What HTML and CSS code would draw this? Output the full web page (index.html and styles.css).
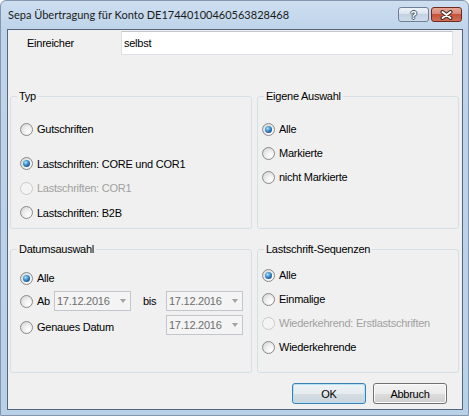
FILE: index.html
```html
<!DOCTYPE html>
<html>
<head>
<meta charset="utf-8">
<link rel="stylesheet" href="styles.css">
</head>
<body>
<div class="window">
  <div class="titlebar">
    <span class="title">Sepa Übertragung für Konto DE17440100460563828468</span>
    <div class="caption-buttons">
      <div class="cap-btn help">?</div>
      <div class="cap-btn close">
        <svg width="13" height="10" viewBox="0 0 13 10">
          <path d="M2.5 2 L10.5 8 M10.5 2 L2.5 8" stroke="#3a2a28" stroke-width="4" stroke-linecap="round"/>
          <path d="M2.5 2 L10.5 8 M10.5 2 L2.5 8" stroke="#ffffff" stroke-width="2" stroke-linecap="round"/>
        </svg>
      </div>
    </div>
  </div>
  <div class="client">
    <div class="row-einreicher">
      <span class="lbl">Einreicher</span>
      <div class="textbox">selbst</div>
    </div>
    <div class="groups">
      <fieldset class="group left">
        <legend>Typ</legend>
        <div class="opts typ">
          <div class="opt spaced"><span class="radio"></span><span>Gutschriften</span></div>
          <div class="opt"><span class="radio checked"></span><span>Lastschriften: CORE und COR1</span></div>
          <div class="opt disabled"><span class="radio"></span><span>Lastschriften: COR1</span></div>
          <div class="opt"><span class="radio"></span><span>Lastschriften: B2B</span></div>
        </div>
      </fieldset>
      <fieldset class="group right">
        <legend>Eigene Auswahl</legend>
        <div class="opts eigene">
          <div class="opt"><span class="radio checked"></span><span>Alle</span></div>
          <div class="opt"><span class="radio"></span><span>Markierte</span></div>
          <div class="opt"><span class="radio"></span><span>nicht Markierte</span></div>
        </div>
      </fieldset>
      <fieldset class="group left">
        <legend>Datumsauswahl</legend>
        <div class="datum">
          <div class="opt"><span class="radio checked"></span><span>Alle</span></div>
          <div class="date-row ab">
            <div class="opt w-ab"><span class="radio"></span><span>Ab</span></div>
            <div class="combo"><span>17.12.2016</span><span class="arrow"></span></div>
            <span class="bis">bis</span>
            <div class="combo"><span>17.12.2016</span><span class="arrow"></span></div>
          </div>
          <div class="date-row gen">
            <div class="opt w-gen"><span class="radio"></span><span>Genaues Datum</span></div>
            <div class="combo"><span>17.12.2016</span><span class="arrow"></span></div>
          </div>
        </div>
      </fieldset>
      <fieldset class="group right">
        <legend>Lastschrift-Sequenzen</legend>
        <div class="opts seq">
          <div class="opt"><span class="radio checked"></span><span>Alle</span></div>
          <div class="opt"><span class="radio"></span><span>Einmalige</span></div>
          <div class="opt disabled"><span class="radio"></span><span>Wiederkehrend: Erstlastschriften</span></div>
          <div class="opt"><span class="radio"></span><span>Wiederkehrende</span></div>
        </div>
      </fieldset>
    </div>
    <div class="buttons">
      <div class="btn default">OK</div>
      <div class="btn">Abbruch</div>
    </div>
  </div>
</div>
</body>
</html>
```
FILE: styles.css
```css
body {
  margin: 0;
  width: 469px;
  height: 416px;
  overflow: hidden;
  background: #ffffff;
}

.window {
  box-sizing: border-box;
  width: 469px;
  height: 416px;
  border: 1px solid #8396ad;
  border-radius: 6px 6px 0 0;
  background: linear-gradient(to bottom, #cddef0 0, #bfd4ea 28px, #b9d0e9 100%);
  display: flex;
  flex-direction: column;
  font-family: "Liberation Sans", Arial, sans-serif;
  font-size: 11px;
  letter-spacing: -0.25px;
  color: #000000;
}

.titlebar {
  height: 28px;
  display: flex;
  align-items: center;
  justify-content: space-between;
  padding: 0 6px 0 7px;
}

.title {
  font-family: Lato, "Liberation Sans", sans-serif;
  font-size: 11px;
  letter-spacing: 0;
  line-height: 14px;
  color: #1a1a1a;
}

.caption-buttons {
  display: flex;
  gap: 2px;
  align-self: flex-start;
  margin-top: 6px;
}

.cap-btn {
  box-sizing: border-box;
  width: 31px;
  height: 15px;
  border-radius: 3px;
  display: flex;
  align-items: center;
  justify-content: center;
}

.help {
  border: 1px solid #6e8096;
  background: linear-gradient(#eef3f9 0%, #dae4ef 45%, #c3d2e2 50%, #cfdcea 100%);
  color: #ffffff;
  font-family: "Liberation Sans", sans-serif;
  font-weight: bold;
  font-size: 11px;
  letter-spacing: 0;
  line-height: 12px;
  text-shadow: 1px 0 0 #44566c, -1px 0 0 #44566c, 0 1px 0 #44566c, 0 -1px 0 #44566c;
}

.close {
  border: 1px solid #6e2a1f;
  background: linear-gradient(#e6a797 0%, #d98a78 45%, #c6533a 50%, #d26f57 100%);
}

.client {
  flex: 1;
  margin: 0 5px 5px 6px;
  border: 1px solid #56657a;
  background: #f0f0f0;
  display: flex;
  flex-direction: column;
}

.row-einreicher {
  display: flex;
  align-items: center;
  height: 24px;
  margin-top: 1px;
  padding-left: 19px;
}

.lbl {
  width: 94px;
}

.textbox {
  box-sizing: border-box;
  width: 332px;
  height: 24px;
  background: #ffffff;
  border: 1px solid #dde0e5;
  border-top-color: #c3c7cd;
  padding: 4px 0 0 2px;
  line-height: 14px;
}

.groups {
  display: grid;
  grid-template-columns: 242px 202px;
  grid-template-rows: 140px 131px;
  column-gap: 5px;
  row-gap: 13px;
  margin: 34px 0 0 2px;
}

fieldset.group {
  margin: 0;
  padding: 0;
  border: 1px solid #d5dfe5;
  border-radius: 3px;
  min-width: 0;
  box-sizing: border-box;
}

legend {
  margin-left: 6px;
  padding: 0 2px;
  line-height: 14px;
}

.opts {
  display: flex;
  flex-direction: column;
  gap: 8px;
}

.group.left .opts,
.group.left .datum {
  padding-left: 9px;
}

.group.right .opts {
  padding-left: 4px;
}

.typ {
  padding-top: 18px;
  gap: 8.5px;
}

.typ .spaced {
  margin-bottom: 10px;
}

.eigene {
  padding-top: 18px;
}

.seq {
  padding-top: 11px;
}

.datum {
  display: flex;
  flex-direction: column;
  padding-top: 14px;
}

.opt {
  display: flex;
  align-items: center;
  gap: 4px;
  height: 16px;
  line-height: 16px;
  white-space: nowrap;
}

.opt.disabled {
  color: #a0a0a0;
}

.radio {
  box-sizing: border-box;
  width: 13px;
  height: 13px;
  flex: none;
  border-radius: 50%;
  border: 1px solid #8a8a8a;
  background: radial-gradient(circle at 70% 70%, #ffffff 0%, #eeeeee 45%, #cdcdcd 100%);
  display: flex;
  align-items: center;
  justify-content: center;
}

.opt.disabled .radio {
  border-color: #cacaca;
  background: #f4f4f4;
}

.radio.checked::after {
  content: "";
  width: 7px;
  height: 7px;
  border-radius: 50%;
  background: radial-gradient(circle at 38% 35%, #b5e6ff 0%, #4a9ad6 35%, #14558f 75%, #0d3e6b 100%);
}

.date-row {
  display: flex;
  height: 20px;
}

.date-row.ab {
  align-items: center;
  margin-top: 5px;
}

.date-row.gen {
  align-items: flex-end;
  margin-top: 4px;
}

.w-ab {
  width: 34px;
}

.w-gen {
  width: 146px;
}

.bis {
  box-sizing: border-box;
  width: 35px;
  padding-left: 12px;
}

.combo {
  box-sizing: border-box;
  width: 77px;
  height: 20px;
  flex: none;
  border: 1px solid #c3c7cb;
  background: #f4f4f4;
  color: #6d6d6d;
  display: flex;
  align-items: center;
  justify-content: space-between;
  padding: 0 4px 0 2px;
}

.arrow {
  width: 0;
  height: 0;
  border-left: 3.5px solid transparent;
  border-right: 3.5px solid transparent;
  border-top: 4px solid #a3a3a3;
}

.buttons {
  display: flex;
  justify-content: flex-end;
  gap: 7px;
  margin-top: 10px;
  padding-right: 15px;
}

.btn {
  box-sizing: border-box;
  width: 74px;
  height: 21px;
  border: 1px solid #707070;
  border-radius: 3px;
  display: flex;
  align-items: center;
  justify-content: center;
  background: linear-gradient(#f2f2f2 0%, #ebebeb 50%, #dddddd 51%, #cfcfcf 100%);
  box-shadow: inset 0 0 0 1px #fbfbfb;
}

.btn.default {
  border-color: #3c7fb1;
  box-shadow: inset 0 0 0 1px #b4e2f6;
  background: linear-gradient(#eef3f6 0%, #e5ebef 50%, #d6dee4 51%, #cad4db 100%);
}
```
